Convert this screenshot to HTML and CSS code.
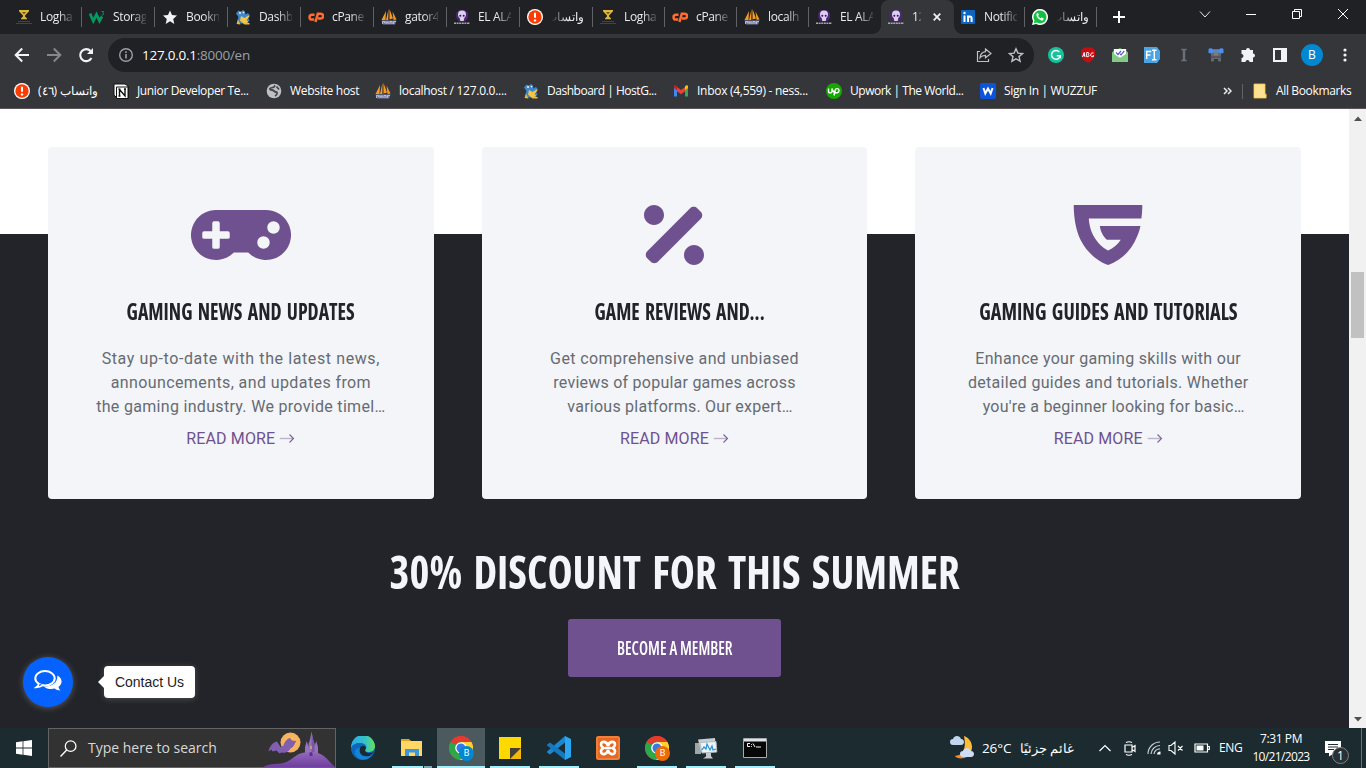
FILE: index.html
```html
<!DOCTYPE html>
<html lang="en">
<head>
<meta charset="utf-8">
<title>127.0.0.1:8000/en</title>
<link rel="stylesheet" href="styles.css">
</head>
<body>
<svg class="defs" width="0" height="0">
  <symbol id="hourglass" viewBox="0 0 16 16"><path d="M3 1h10v1.300L9 6.600v1l2 2v.6H5v-.6l2-2v-1L3 2.300z" fill="#dcb93c"/><path d="M6 3h4L8 5.200z" fill="#6b5510"/><path d="M2 12.500h12M0 14.500h16" stroke="#51451f" stroke-width="1.100"/></symbol>
  <symbol id="w3" viewBox="0 0 16 16"><path d="M1 4.500l3.300 7.500L7.500 5.500 10.500 12 13 7.500" fill="none" stroke="#059862" stroke-width="2.800"/><path d="M12.500 2.500h2.200l-1 1.500c1.300.2 1.300 2-.2 2h-1" fill="none" stroke="#059862" stroke-width=".9"/></symbol>
  <symbol id="star" viewBox="0 0 16 16"><path d="M8 1.500l2 4.600 5 .5-3.800 3.400 1.100 5L8 12.300 3.700 15l1.100-5L1 6.600l5-.5z" fill="#f1f3f4"/></symbol>
  <symbol id="gator" viewBox="0 0 16 16"><path d="M1 4.500L3.500 1.500 6 2.500 8 1l2 1.500.5 3L13 4l2 2.500-2 2 1.500 3-3 3H5L2 12.500 3.500 8z" fill="#3f87c9"/><path d="M6 7l3.500 2 4-2.500 1 1-3 3.500 2 2L9 15l-4-3.500z" fill="#f7c544"/><path d="M1.500 15L3 11l2.500 4.500zM9 15.500l1-2 4.500.5v1.500z" fill="#f0bd37"/><circle cx="5" cy="4" r=".9" fill="#fff"/><circle cx="8.500" cy="3.600" r=".8" fill="#fff"/></symbol>
  <symbol id="cpanel" viewBox="0 0 16 16"><path d="M6.500 5.700H4a2.400 2.400 0 0 0 0 4.900h2.200M7.500 13l2.300-8.200h2.900a2.300 2.300 0 0 1 0 4.800H10" fill="none" stroke="#ff6c2c" stroke-width="2.500"/></symbol>
  <symbol id="pma" viewBox="0 0 16 16"><path d="M5 2L.5 11h4zM7.500 0L5 11h2.300zM8.500 0l3.500 9.500-3.500 1zM11.500 2.500l4 8-3 .5z" fill="#f59a23"/><path d="M.5 11.500h15l-1.500 4H2z" fill="#777b9f"/><path d="M1.500 15v-2.500h2V14M5 15v-2.500l1 1.200 1-1.200V15M9 15v-2.500h2V15M12.500 15v-2.500H15" fill="none" stroke="#c8cbe2" stroke-width=".8"/></symbol>
  <symbol id="skull" viewBox="0 0 16 16"><path d="M2.300 4L5 1h6l3 3v5l-3 3.500H5L2.300 9z" fill="#4f257b"/><path d="M4 5.500A4 4 0 0 1 12 5.500c0 2-1 3-1.700 3.600L9.700 12H6.300L5.700 9.100C4.700 8.500 4 7.500 4 5.500z" fill="#d9d2ea"/><circle cx="6.300" cy="6.800" r="1" fill="#33154f"/><circle cx="9.700" cy="6.800" r="1" fill="#33154f"/><path d="M0 14.200h16" stroke="#a9a6b0" stroke-width="1.500" stroke-dasharray="2 .6"/></symbol>
  <symbol id="alert" viewBox="0 0 16 16"><circle cx="8" cy="8" r="8" fill="#fff"/><circle cx="8" cy="8" r="6.700" fill="#fc3d03"/><path d="M8 3.700v5" stroke="#fff" stroke-width="2"/><circle cx="8" cy="11.400" r="1.200" fill="#fff"/></symbol>
  <symbol id="linkedin" viewBox="0 0 16 16"><rect x="1" y="1" width="14" height="14" rx="1" fill="#0a66c2"/><path d="M4.500 6.500V13M8 13V6.500M8 9.500c0-2.700 3.600-2.700 3.600 0V13" fill="none" stroke="#fff" stroke-width="2"/><circle cx="4.500" cy="4" r="1.200" fill="#fff"/></symbol>
  <symbol id="whatsapp" viewBox="0 0 16 16"><path d="M0 16l1.100-4A8 8 0 1 1 4.200 15z" fill="#fff"/><path d="M1.700 14.300l.8-2.800a6.500 6.500 0 1 1 2.200 2.100z" fill="#12c143"/><path d="M5 4.200c-1.500 1.800.2 4.500 1.800 5.800 1.800 1.500 4.300 2.300 4.800.3.200-.9-.3-1.100-1.600-1.700-.8-.3-1 1-1.600.7C7.500 9 6.600 8 6.200 7.100c-.2-.6.8-.9.600-1.500-.5-1.500-.9-2-1.800-1.400z" fill="#fff"/></symbol>
  <symbol id="chrome" viewBox="0 0 24 24"><circle cx="12" cy="12" r="12" fill="#e33b2e"/><path d="M1.600 6A12 12 0 0 0 11 24l6-9-5-3-5.200 3z" fill="#2aa84a"/><path d="M22.400 6H12l5.200 9L11 24A12 12 0 0 0 22.400 6z" fill="#fdd231"/><path d="M1.600 6L6.800 15 12 12V6z" fill="#2aa84a"/><path d="M1.600 6A12 12 0 0 1 22.400 6H12a6 6 0 0 0-5.500 4z" fill="#e33b2e"/><path d="M1.600 6L6.800 15l.5-6z" fill="#2aa84a"/><circle cx="12" cy="12" r="5.800" fill="#fff"/><circle cx="12" cy="12" r="4.500" fill="#3478ea"/></symbol>
  <symbol id="arrow" viewBox="0 0 16 16"><path d="M.8 7.500h13.500" stroke="#bdb4cb" stroke-width="1.400"/><path d="M10.500 3.500l4 4-4 4" fill="none" stroke="#7b5f9b" stroke-width="1.100"/></symbol>
</svg>

<header class="browser">
  <div class="tabstrip">
    <div class="tab"><svg><use href="#hourglass"/></svg><span>Logha</span></div>
    <div class="tab"><svg><use href="#w3"/></svg><span>Storag</span></div>
    <div class="tab"><svg><use href="#star"/></svg><span>Bookn</span></div>
    <div class="tab"><svg><use href="#gator"/></svg><span>Dashb</span></div>
    <div class="tab"><svg><use href="#cpanel"/></svg><span>cPanel</span></div>
    <div class="tab"><svg><use href="#pma"/></svg><span>gator4</span></div>
    <div class="tab"><svg><use href="#skull"/></svg><span>EL ALA</span></div>
    <div class="tab rtl"><svg><use href="#alert"/></svg><span dir="rtl">واتساب</span></div>
    <div class="tab narrow"><svg><use href="#hourglass"/></svg><span>Logha</span></div>
    <div class="tab narrow"><svg><use href="#cpanel"/></svg><span>cPane</span></div>
    <div class="tab narrow"><svg><use href="#pma"/></svg><span>localh</span></div>
    <div class="tab narrow last"><svg><use href="#skull"/></svg><span>EL ALA</span></div>
    <div class="tab narrow active"><svg><use href="#skull"/></svg><span>12</span><svg class="tab-close" viewBox="0 0 8 8"><path d="M.7.7l6.600 6.600M7.300.7L.7 7.300" stroke="#f1f3f4" stroke-width="1.700"/></svg></div>
    <div class="tab narrow"><svg><use href="#linkedin"/></svg><span>Notific</span></div>
    <div class="tab narrow rtl"><svg><use href="#whatsapp"/></svg><span dir="rtl">واتساب</span></div>
    <svg class="newtab" viewBox="0 0 12 12"><path d="M6 0v12M0 6h12" stroke="#fff" stroke-width="2"/></svg>
    <div class="winctl">
      <svg viewBox="0 0 12 12"><path d="M1 3.500l5 5.500 5-5.500" fill="none" stroke="#e8eaed"/></svg>
      <svg viewBox="0 0 12 12"><path d="M1 6.500h10" stroke="#fff"/></svg>
      <svg viewBox="0 0 12 12"><path d="M1.500 3.500h7v7h-7zM3.500 3.500v-2h7v7h-2" fill="none" stroke="#fff"/></svg>
      <svg viewBox="0 0 12 12"><path d="M1 1l10 10M11 1L1 11" stroke="#fff"/></svg>
    </div>
  </div>

  <div class="toolbar">
    <svg class="nav" viewBox="0 0 16 16"><path d="M15 8H2M8.200 1.500L1.700 8l6.500 6.500" fill="none" stroke="#f1f3f4" stroke-width="2"/></svg>
    <svg class="nav" viewBox="0 0 16 16"><path d="M1 8h13M7.800 1.500L14.300 8l-6.500 6.500" fill="none" stroke="#85878a" stroke-width="2"/></svg>
    <svg class="nav" viewBox="0 0 16 16"><path d="M13.500 11A6 6 0 1 1 12.600 4" fill="none" stroke="#f1f3f4" stroke-width="2.100"/><path d="M15 1v6H9z" fill="#f1f3f4"/></svg>
    <div class="omnibox">
      <svg class="info" viewBox="0 0 16 16"><circle cx="8" cy="8" r="6.300" fill="none" stroke="#9aa0a6" stroke-width="1.400"/><path d="M8 7v4.500M8 4.300v1.600" stroke="#9aa0a6" stroke-width="1.600"/></svg>
      <div class="url"><b>127.0.0.1</b>:8000/en</div>
      <div class="slot"><svg viewBox="0 0 16 16"><path d="M4 4.500H1.500v10h11V12" fill="none" stroke="#bdc1c6" stroke-width="1.200"/><path d="M9.500 2l5.500 4.500-5.500 4.300V8.300c-2.500 0-4.300.8-5.500 2.400C4.300 7.200 6.200 5 9.500 4.600z" fill="none" stroke="#bdc1c6" stroke-width="1.200"/></svg></div>
      <div class="slot"><svg viewBox="0 0 16 16"><path d="M8 1.800l1.900 4.300 4.700.4L11 9.600l1.100 4.600L8 11.800l-4.100 2.400L5 9.600 1.400 6.500l4.700-.4z" fill="none" stroke="#bdc1c6" stroke-width="1.400"/></svg></div>
    </div>
    <div class="extensions">
      <div class="slot"><svg viewBox="0 0 16 16"><circle cx="8" cy="8" r="8" fill="#15c39a"/><path d="M11.300 5A4.400 4.400 0 1 0 12.300 8.700H8.800M12.300 8.700v2.500" fill="none" stroke="#fff" stroke-width="1.400"/></svg></div>
      <div class="slot"><svg viewBox="0 0 16 16"><path d="M4.500.5h7L15 3v5c0 3-3 6-7 7.800C4 14 1 11 1 8V3z" fill="#c70d12"/><path d="M2.500 10l1.700-4.500L5 10M3.300 8.500H5M6.700 5.500v4.200h1.500c1.200-.3 1-2 0-2.200 1-.2 1-1.800 0-2zM13.500 6h-1.700c-1.500.5-1.500 3.500 0 3.700h1.500V8" fill="none" stroke="#fff" stroke-width="1"/></svg></div>
      <div class="slot"><svg viewBox="0 0 16 16"><path d="M0 5l8-4 8 4v10H0z" fill="#65b96a"/><path d="M1.800 2h12.400v6L8 11 1.800 8z" fill="#fff"/><path d="M0 5.500l8 5.500 8-5.500V15H0z" fill="#82cb83"/><path d="M4 5.500l2 2 3-3.500M8 7l1 .8L12.300 4" fill="none" stroke="#5b60c5" stroke-width="1.200"/></svg></div>
      <div class="slot"><svg viewBox="0 0 16 16"><path d="M0 0h13l3 4v8l-3 4H0z" fill="#4ba4e3"/><path d="M2.700 12V4.500h4.500M2.700 8h3.800M8 3.300h4.500M8 12.700h4.500M10.300 3.300v9.400" fill="none" stroke="#fff" stroke-width="1.400"/></svg></div>
      <div class="slot"><svg viewBox="0 0 16 16"><path d="M5.300 2.500h5.400M5.300 13.500h5.400" stroke="#6b7178" stroke-width="1.400"/><path d="M8 2v12" stroke="#6b7178" stroke-width="2.400"/></svg></div>
      <div class="slot"><svg viewBox="0 0 16 16"><path d="M3 5h10v9.500h-3V12H6v2.500H3z" fill="#63676e"/><path d="M2.500 10h11" stroke="#46494f"/><path d="M.5 2.500C1 1 4 1 4.500 2.300h7C12 1 15 1 15.500 2.500V6l-3 .5-1.500-1H5l-1.500 1-3-.5z" fill="#4a8ff0"/><path d="M6 3.500h4v5H6z" fill="#7a7e85"/></svg></div>
      <div class="slot"><svg viewBox="0 0 16 16"><path d="M6 3a2 2 0 0 1 4 0h3v3.500a2 2 0 0 1 0 4V15H9.500a2 2 0 0 0-4 0H1.500v-4a2 2 0 0 0 0-4V3z" fill="#f1f3f4"/></svg></div>
      <div class="slot"><svg viewBox="0 0 16 16"><path d="M2 2h12v12H2z" fill="none" stroke="#f1f3f4" stroke-width="2"/><path d="M9 2h5v12H9z" fill="#f1f3f4"/></svg></div>
      <div class="slot"><span class="avatar">B</span></div>
      <div class="slot menu"><svg viewBox="0 0 16 16" fill="#f1f3f4"><circle cx="8" cy="3" r="1.600"/><circle cx="8" cy="8" r="1.600"/><circle cx="8" cy="13" r="1.600"/></svg></div>
    </div>
  </div>

  <div class="bookmarks">
    <div class="bm"><svg><use href="#alert"/></svg><span dir="rtl" class="ar">واتساب (٤٦)</span></div>
    <div class="bm"><svg viewBox="0 0 16 16"><path d="M1 1h11l3 2v12H4l-3-3z" fill="#fff" stroke="#111"/><path d="M3.500 4H15v11.500H3.500z" fill="#fff" stroke="#111"/><path d="M6.500 13V6.500l5.500 6.300V6M5.500 6.300h2M5.500 13h2M11 6h2" fill="none" stroke="#111" stroke-width="1.400"/></svg><span>Junior Developer Te...</span></div>
    <div class="bm"><svg viewBox="0 0 16 16"><circle cx="8" cy="8" r="7.300" fill="#bdc1c6"/><path d="M8 2.500c2 1-1 2-3 2.500s-1 2 1 2 2 2 4 2 1 3-1 4M10.500 3.500l2.500 3" fill="none" stroke="#46484d" stroke-width="1.800"/></svg><span class="loose">Website host</span></div>
    <div class="bm"><svg><use href="#pma"/></svg><span class="loose">localhost / 127.0.0....</span></div>
    <div class="bm"><svg><use href="#gator"/></svg><span class="tight">Dashboard | HostG...</span></div>
    <div class="bm"><svg viewBox="0 0 16 16"><path d="M1 3v10.500h3V7z" fill="#4285f4"/><path d="M12 7v6.500h3V3z" fill="#34a853"/><path d="M4 8.300V4l4 3 4-3v4.300L8 11.300z" fill="#ea4335"/><path d="M1 5V3.500C1 2 2.500 2 3.300 2.700L4 3.300v4z" fill="#c5221f"/><path d="M15 5V3.500c0-1.500-1.500-1.500-2.300-.8L12 3.300v4z" fill="#fbbc04"/></svg><span class="loose">Inbox (4,559) - ness...</span></div>
    <div class="bm"><svg viewBox="0 0 16 16"><circle cx="8" cy="8" r="8" fill="#14a800"/><path d="M2.500 5.500V8c0 2.500 3.500 2.500 3.500 0V5.500c.7 2 1.500 4.500 3.500 4.500M8 12.500l1-5c.5-2.500 4-2.500 4 0S10 10.500 9 9" fill="none" stroke="#fff" stroke-width="1.400"/></svg><span class="tight">Upwork | The World...</span></div>
    <div class="bm"><svg viewBox="0 0 16 16"><rect width="16" height="16" rx="2" fill="#0c54db"/><path d="M3.500 5l1.800 5.500L8 5.500l2.700 5L12.500 5" fill="none" stroke="#fff" stroke-width="2"/></svg><span>Sign In | WUZZUF</span></div>
    <div class="more"><svg viewBox="0 0 9 8"><path d="M1 1l3 3-3 3M5 1l3 3-3 3" fill="none" stroke="#e8eaed" stroke-width="1.500"/></svg></div>
    <div class="bm all"><svg viewBox="0 0 16 16"><path d="M2 1h11v10l1 1v3H2z" fill="#fde293"/><path d="M2 1h11v10h1.200v4H2z" fill="none" stroke="#f7cb4d" stroke-width=".8"/></svg><span>All Bookmarks</span></div>
  </div>
</header>

<div class="viewport">
  <main class="page">
    <section class="cards">
      <article class="card">
        <svg class="card-icon" viewBox="0 0 640 512" width="100" height="80"><path fill-rule="evenodd" d="M480.070 96H160a160 160 0 1 0 114.240 272h91.520A160 160 0 1 0 480.070 96zM248 268a12 12 0 0 1-12 12h-52v52a12 12 0 0 1-12 12h-24a12 12 0 0 1-12-12v-52H84a12 12 0 0 1-12-12v-24a12 12 0 0 1 12-12h52v-52a12 12 0 0 1 12-12h24a12 12 0 0 1 12 12v52h52a12 12 0 0 1 12 12zm216 76a40 40 0 1 1 40-40 40 40 0 0 1-40 40zm64-96a40 40 0 1 1 40-40 40 40 0 0 1-40 40z"/></svg>
        <h5><span class="t1">GAMING NEWS AND UPDATES</span></h5>
        <p><span class="ls6">Stay up-to-date with the latest news,</span><span class="ls4">announcements, and updates from</span><span>the gaming industry. We provide timel…</span></p>
        <a>READ MORE<svg><use href="#arrow"/></svg></a>
      </article>
      <article class="card">
        <svg class="card-icon" viewBox="0 0 384 512" width="60" height="80"><path d="M109.250 173.250c24.990-24.990 24.990-65.520 0-90.510-24.990-24.990-65.520-24.990-90.510 0-24.990 24.990-24.990 65.520 0 90.510 25 25 65.520 25 90.510 0zm256 165.490c-24.990-24.990-65.520-24.990-90.510 0-24.990 24.990-24.990 65.520 0 90.510 24.990 24.990 65.520 24.990 90.510 0 25-24.990 25-65.510 0-90.510zm-1.940-231.430l-22.620-22.620c-12.500-12.500-32.760-12.500-45.250 0L20.690 359.440c-12.500 12.500-12.500 32.760 0 45.250l22.620 22.620c12.500 12.500 32.760 12.500 45.250 0l274.750-274.750c12.500-12.490 12.500-32.750 0-45.250z"/></svg>
        <h5 class="clamped"><span class="t2">GAME REVIEWS AND...</span></h5>
        <p><span class="ls4">Get comprehensive and unbiased</span><span class="ls2">reviews of popular games across</span><span class="ls2 clamped">various platforms. Our expert…</span></p>
        <a>READ MORE<svg><use href="#arrow"/></svg></a>
      </article>
      <article class="card">
        <svg class="card-icon" viewBox="0 0 448 512" width="70" height="80"><path d="M443.400 64H4.600c0 103.300 22.200 180.100 43.400 222.400C112 414.100 224 448 225.300 448a312.800 312.800 0 0 0 140.600-103.500c25.900-33.900 53.100-87.200 65.900-145.800H171.800c4.100 36.400 22.200 67.900 45.100 86.900h88.600c-17 28.200-48.200 54.400-80.500 69.500-31.200-13.300-69.100-46.500-96.600-98.400-26.600-53.800-27.100-105.900-27.100-105.900H437.600a625.900 625.900 0 0 0 5.800-70.700z"/></svg>
        <h5><span class="t3">GAMING GUIDES AND TUTORIALS</span></h5>
        <p><span>Enhance your gaming skills with our</span><span>detailed guides and tutorials. Whether</span><span class="ls2 clamped">you're a beginner looking for basic…</span></p>
        <a>READ MORE<svg><use href="#arrow"/></svg></a>
      </article>
    </section>
    <section class="promo">
      <h1><span>30% DISCOUNT FOR THIS SUMMER</span></h1>
      <button><span>BECOME A MEMBER</span></button>
    </section>
    <div class="contact">
      <span class="chat"><svg viewBox="0 0 28 22"><ellipse cx="11" cy="8.300" rx="9.700" ry="7.200" fill="none" stroke="#fff" stroke-width="2"/><path d="M5 13.500c0 2-1.500 3-3 4 3 0 5-.7 7-2.300" fill="#0662ff" stroke="#fff" stroke-width="1.700"/><path d="M23.300 5.500c6 3 5 9 1.200 11.200.2 1.600 1 2.500 2 3.800-2.500 0-4-.5-5.800-1.900-4.500.9-8.500 0-11-2.200C17.500 17 24 13 23.300 5.500z" fill="#fff"/></svg></span>
      <span class="tip">Contact Us</span>
    </div>
  </main>
  <div class="scrollbar">
    <svg viewBox="0 0 8 5"><path d="M0 5l4-4.500L8 5z" fill="#505050"/></svg>
    <i></i>
    <svg viewBox="0 0 8 5"><path d="M0 0l4 4.500L8 0z" fill="#505050"/></svg>
  </div>
</div>

<footer class="taskbar">
  <div class="start"><svg viewBox="0 0 16 16" fill="#fff"><path d="M0 2.200L6.600 1.300V7.600H0zM7.400 1.200L16 0v7.600H7.400zM0 8.400h6.600v6.300L0 13.800zM7.400 8.400H16V16l-8.600-1.200z"/></svg></div>
  <div class="search">
    <svg class="lens" viewBox="0 0 16 16"><circle cx="10" cy="5.800" r="5" fill="none" stroke="#fff" stroke-width="1.200"/><path d="M6.300 9.500L.5 15.500" stroke="#fff" stroke-width="1.300"/></svg>
    <span>Type here to search</span>
    <svg class="castle" viewBox="0 0 72 38"><defs><linearGradient id="hill" x2="0" y2="1"><stop offset="0" stop-color="#9468be"/><stop offset="1" stop-color="#6e3f9c"/></linearGradient><radialGradient id="moon"><stop offset="0" stop-color="#ffc44c"/><stop offset="1" stop-color="#f5ae62"/></radialGradient></defs><circle cx="27.500" cy="13.500" r="10" fill="url(#moon)"/><path d="M5.500 22.500c1-5 4-9 8.500-10l3.500 5.500 3-1.500c1-4 4-7 6.500-7.500l2 2.500 4.500.5c-2 2-2 6-6 7.500-2 4-6 5-9 4l-2 1-3-3-4 1-1-2z" fill="#805eb0"/><path d="M42 30V18l1.800-6 1.800 6v-3l1.500-5 1.400-7.500L50 10l1.500 5v2l1.800-5 1.700 6v12z" fill="#9571c1"/><path d="M48.600 3v26h2.900V15l-1.500-5z" fill="#775aa6"/><path d="M0 38c9-5 19-1 27-7 8-6 11-8 21-8 13 0 16 8 24 15z" fill="url(#hill)"/><path d="M46.500 27v-2.500a1.500 1.500 0 0 1 3 0V27z" fill="#5d318a"/><path d="M48 17v3" stroke="#f3b558" stroke-width="1.200"/></svg>
  </div>
  <div class="apps">
    <div class="app"><svg viewBox="0 0 24 24"><defs><linearGradient id="edge" x2="1"><stop offset="0" stop-color="#28a9ea"/><stop offset=".6" stop-color="#35c4c8"/><stop offset="1" stop-color="#67df55"/></linearGradient></defs><circle cx="12" cy="12" r="12" fill="#0c67bd"/><path d="M0 12A12 12 0 0 1 24 10c0 5-4 6-7 6s-3-2-2.300-3c2-3-1-6-5.700-6S1 9 0 12z" fill="url(#edge)"/><path d="M9 12c1-3 5-3 6 0 0 1-1 1-1 2.500 0 2.500 5 3.500 8.500 1.500-1 3-4 4.500-7 4.500C10 20.500 7.500 16 9 12z" fill="#1a2a2f"/><path d="M9 12c-2 4 1 8.500 6.500 8.500 3 0 5.500-1.500 7-4.500-3 8-13 10-17 4.500C2 15.500 5 12 9 12z" fill="#1385d7"/></svg></div>
    <div class="app split"><svg viewBox="0 0 24 24"><path d="M1 3h8l2 2h-10z" fill="#e3a21a"/><path d="M1 5h21v15H1z" fill="#ffd765"/><path d="M5 20v-7h14v7h-4v-3.500H9V20z" fill="#3a96dd"/></svg></div>
    <div class="app current"><svg><use href="#chrome"/></svg><b class="badge">B</b></div>
    <div class="app on"><svg viewBox="0 0 24 24"><path d="M1 1h22v11L12 23H1z" fill="#fdd900"/><path d="M12 12h11v11H12z" fill="#f4b80b"/><path d="M12 12h11L12 23z" fill="#454035"/></svg></div>
    <div class="app on"><svg viewBox="0 0 24 24"><path d="M18 0l6 3v18l-6 3z" fill="#2aa7f2"/><path d="M18 0v6.500L3 18.500l-3-2v-1z" fill="#1b86d1"/><path d="M0 8.500l3-2 15 11V24L0 9.500z" fill="#1479c0"/></svg></div>
    <div class="app"><svg viewBox="0 0 24 24"><rect width="24" height="24" rx="2" fill="#e8681f"/><rect x="1" y="1" width="22" height="22" rx="1.500" fill="none" stroke="#f5975d"/><path d="M12 10c-1-5-7-5.500-7-1.500 0 2 1 2.500 2.500 3.500C5.500 13 5 14 5 15.500c0 4 6 3.500 7-1.500 1 5 7 5.500 7 1.500 0-1.500-.5-2.500-2.500-3.500C18 11 19 10.500 19 8.500c0-4-6-3.500-7 1.500zM9 12h6" fill="none" stroke="#fff" stroke-width="2.600"/></svg></div>
    <div class="app on"><svg><use href="#chrome"/></svg><b class="badge orange">B</b></div>
    <div class="app on"><svg viewBox="0 0 24 24"><path d="M1 7h6v11H1z" fill="#9fa6a8"/><path d="M4 3.500l17-1.500 1 12-15 1.500z" fill="#c9ced1"/><path d="M6 6.500l16-1 .8 10.500L8 17z" fill="#eef4f7" stroke="#b5babd"/><path d="M8 14l2-3 2 2 1-5 3 6 2-4 1 4 3-1" fill="none" stroke="#2490d9" stroke-width="1.200"/><path d="M12 17h5v3l2 2.500H9l3-2z" fill="#c4c8ca"/></svg></div>
    <div class="app on"><svg viewBox="0 0 24 24"><path d="M.5 2.500h23v19H.5z" fill="#070707" stroke="#a6aaac"/><path d="M1 3h22v2.500H1z" fill="#dfe3e5"/><path d="M7 7.500H4.500v3H7M8.500 8v.8M8.500 10v.8M10 7.500l2 3.500M13 11h5" fill="none" stroke="#f4f4f4"/></svg></div>
  </div>
  <div class="tray">
    <div class="weather"><svg viewBox="0 0 24 24"><path d="M14 1c5 2 8 6 8 11s-4 11-11 11c-3 0-5-1-6-2 7 0 12-6 9-20z" fill="#ffbd35"/><path d="M5 21c5 0 9-3 10-8l2 9c-4 2-10 2-12-1z" fill="#f78b1f"/><path d="M3 10a3 3 0 0 1 0-6c1-4 7-4 8 0 4 0 4 6 0 6z" fill="#c3d4ef"/><path d="M13 22a3 3 0 0 1 0-6c1-4 7-4 8 0 4 0 4 6 0 6z" fill="#cfdcf5"/></svg></div>
    <span class="temp">26°C</span>
    <span class="cond" dir="rtl">غائم جزئيًا</span>
    <div class="slot"><svg viewBox="0 0 12 12"><path d="M.5 9L6 3.500 11.500 9" fill="none" stroke="#fff" stroke-width="1.200"/></svg></div>
    <div class="slot"><svg class="i16" viewBox="0 0 16 16"><path d="M3 5h7v7H3zM10 7.500l3-2v6l-3-2M4 2.500q3-1.500 6 0M4 14.500q3 1.500 6 0" fill="none" stroke="#fff" stroke-width="1.200"/></svg></div>
    <div class="slot"><svg class="i14" viewBox="0 0 14 14"><path d="M1 13A12 12 0 0 1 13 1M4 13A9 9 0 0 1 13 4.500M7 13a6 6 0 0 1 6-5.200" fill="none" stroke="#c6ccce" stroke-width="1.200"/><path d="M10 13.500a3 3 0 0 1 3.500-3v3z" fill="#fff"/></svg></div>
    <div class="slot"><svg class="i16" viewBox="0 0 16 16"><path d="M1 5.500h2l4-3.500v12l-4-3.500H1zM10 6l4.500 4.500M14.500 6L10 10.500" fill="none" stroke="#fff" stroke-width="1.100"/></svg></div>
    <div class="slot"><svg class="i16" viewBox="0 0 16 16"><path d="M1 4h12.500v8H1zM14 6.500h1.300v3H14" fill="none" stroke="#fff" stroke-width="1.200"/><path d="M2.500 5.500h7v5h-7z" fill="#fff"/></svg></div>
    <span class="lang">ENG</span>
    <div class="clock"><span>7:31 PM</span><span>10/21/2023</span></div>
    <div class="notif"><svg viewBox="0 0 16 16"><path d="M0 0h16v12H9.500L4 15.500V12H0z" fill="#fff"/><path d="M3 3.500h10M3 6h10M3 8.500h6" stroke="#1d2c31" stroke-width="1"/></svg><b>1</b></div>
    <div class="peek"></div>
  </div>
</footer>
</body>
</html>
```
FILE: styles.css
```css
* { box-sizing: border-box; }
body {
  margin: 0;
  width: 1366px;
  height: 768px;
  overflow: hidden;
  display: flex;
  flex-direction: column;
  font: 12px/16px "Open Sans", "Noto Sans", sans-serif;
  color: #fff;
  background: #222429;
}
svg { display: block; flex: none; }
.defs { position: absolute; }

/* browser chrome */
.browser { height: 109px; background: #35363a; border-bottom: 1px solid #5c5458; }
.tabstrip { display: flex; height: 34px; padding-left: 8.5px; background: #202124; }
.tab { display: flex; align-items: center; gap: 8px; width: 73px; padding-left: 7.5px; position: relative; color: #e8eaed; letter-spacing: -.35px; }
.tab.narrow { width: 72px; }
.tab > svg { width: 16px; height: 16px; }
.tab > span { width: 33px; white-space: nowrap; -webkit-mask: linear-gradient(90deg, #000 55%, transparent 108%); mask: linear-gradient(90deg, #000 55%, transparent 108%); }
.tab.rtl > span { letter-spacing: 0; -webkit-mask: linear-gradient(270deg, #000 50%, transparent 100%); mask: linear-gradient(270deg, #000 50%, transparent 100%); }
.tab::after { content: ""; position: absolute; right: 0; top: 7px; width: 1px; height: 20px; background: #5f6368; }
.tab.last::after, .tab.active::after { display: none; }
.tab.active { background: #35363a; border-radius: 8px 8px 0 0; width: 73px; margin-right: -1px; }
.tab.active > span { width: 9px; }
.tab.active .tab-close { width: 8px; height: 8px; margin-left: 4px; }
.tab.active::before {
  content: ""; position: absolute; left: -8px; right: -8px; bottom: 0; height: 8px;
  background:
    radial-gradient(circle at 0 0, transparent 7.5px, #35363a 8px) left / 8px 8px no-repeat,
    radial-gradient(circle at 100% 0, transparent 7.5px, #35363a 8px) right / 8px 8px no-repeat;
}
.newtab { width: 12px; height: 12px; margin: 11px 0 0 16px; }
.winctl { display: grid; grid-template-columns: repeat(4, 46px); margin-left: auto; height: 28px; place-items: center; }
.winctl svg { width: 12px; height: 12px; }

.toolbar { display: flex; align-items: center; height: 42px; padding-left: 14px; }
.nav { width: 16px; height: 16px; margin-right: 16px; }
.omnibox { display: flex; align-items: center; width: 926px; height: 34px; margin-left: -2px; padding: 0 2px 0 10px; border-radius: 17px; background: #202124; }
.info { width: 16px; height: 16px; }
.url { flex: 1; padding-left: 8px; font-size: 13.5px; letter-spacing: -.25px; color: #9aa0a6; }
.url b { font-weight: 400; color: #fff; }
.slot { display: flex; align-items: center; justify-content: center; }
.toolbar .slot { width: 32px; }
.toolbar .slot svg { width: 16px; height: 16px; }
.extensions { display: flex; margin-left: 6px; align-items: center; }
.toolbar .menu { margin-left: 1px; }
.avatar { width: 22px; height: 22px; border-radius: 50%; background: #0288d1; text-align: center; line-height: 22px; }

.bookmarks { display: grid; grid-template-columns: 99px 153px 109px 148px 150px 153px 154px 242px 30px 1fr; height: 30px; padding-left: 14px; align-items: center; }
.bm { display: flex; align-items: center; gap: 8px; white-space: nowrap; letter-spacing: -.36px; }
.bm svg { width: 16px; height: 16px; }
.bm span { margin-top: -1px; }
.bm .ar { letter-spacing: 0; }
.bm .tight { letter-spacing: -.48px; }
.bm .loose { letter-spacing: -.28px; }
.more svg { width: 9px; height: 8px; margin-left: 1px; }
.bm.all { height: 15px; border-left: 1px solid #5f6368; margin-left: -10px; padding-left: 9px; }

/* page */
.viewport { display: flex; height: 619px; }
.page { position: relative; width: 1349px; padding-top: 38px; background: linear-gradient(#fff 125px, #222429 125px); }
.cards { display: grid; grid-template-columns: repeat(3, 1fr); gap: 48px; padding: 0 48px; }
.card { display: flex; flex-direction: column; align-items: center; height: 352px; padding-top: 48px; border-radius: 4px; background: #f3f5f9; font-family: Roboto, sans-serif; font-size: 16px; }
.card-icon { fill: #6f518f; }
.card h5 { margin: 24px 0 0; height: 24px; color: #212329; font: 700 23px/24px "Open Sans", sans-serif; font-stretch: 75%; word-spacing: 2px; white-space: nowrap; }
.card h5 span { display: inline-block; }
.t1 { transform: scaleX(.86); }
.t2 { transform: scaleX(.854); }
.t3 { transform: scaleX(.876); }
.card p { margin: 24px 0 0; line-height: 24px; color: #666b72; text-align: center; letter-spacing: .31px; white-space: nowrap; }
.card p span { display: block; }
.card p .ls6 { letter-spacing: .6px; }
.card p .ls4 { letter-spacing: .4px; }
.card p .ls2 { letter-spacing: .24px; }
.card .clamped { padding-left: 11px; }
.card a { display: flex; align-items: center; gap: 4px; margin-top: 8px; line-height: 24px; color: #6f518f; letter-spacing: .13px; }
.card a svg { width: 16px; height: 16px; }

.promo { display: flex; flex-direction: column; align-items: center; padding-top: 47px; }
.promo h1 { margin: 0; height: 50px; font: 700 47px/50px "Open Sans", sans-serif; font-stretch: 75%; word-spacing: 4px; color: #f3f5f9; white-space: nowrap; }
.promo h1 span, .promo button span { display: inline-block; transform: scaleX(.903); }
.promo button { width: 213px; height: 58px; margin-top: 23px; padding: 0; border: 0; border-radius: 3px; background: #6f518f; color: #fff; font: 600 19px/24px "Open Sans", sans-serif; font-stretch: 75%; white-space: nowrap; }
.promo button span { transform: scaleX(.84); }

.contact { position: absolute; left: 23px; bottom: 21px; display: flex; align-items: center; gap: 31px; }
.chat { display: grid; place-items: center; width: 50px; height: 50px; border-radius: 50%; background: #0662ff; box-shadow: 0 1px 6px rgba(255,255,255,.25); }
.chat svg { width: 28px; height: 22px; margin-top: -2px; }
.tip { position: relative; width: 91px; height: 32px; border-radius: 4px; background: #fff; color: #222; text-align: center; font: 14px/32px "Liberation Sans", Arial, sans-serif; box-shadow: 0 1px 6px rgba(255,255,255,.2); }
.tip::before { content: ""; position: absolute; left: -6px; top: 10px; border: 6px solid transparent; border-left: 0; border-right-color: #fff; }

.scrollbar { display: flex; flex-direction: column; align-items: center; width: 17px; padding: 7px 0 6px; background: #f1f1f1; }
.scrollbar svg { width: 8px; height: 5px; }
.scrollbar i { width: 13px; height: 66px; margin: 151px 0 auto; background: #c1c1c1; }

/* taskbar */
.taskbar { display: flex; height: 40px; background: #1b2b30; }
.start { display: grid; place-items: center; width: 48px; }
.start svg { width: 16px; height: 16px; }
.search { display: flex; align-items: center; width: 288px; border: 1px solid #626467; background: #323232; color: #d8d8d8; font-size: 14px; padding-left: 11px; }
.lens { width: 17px; height: 17px; margin-right: 11px; }
.search span { flex: 1; white-space: nowrap; }
.castle { width: 72px; height: 38px; }
.apps { display: flex; gap: 1px; margin-left: 3px; }
.app { display: grid; place-items: center; position: relative; width: 48px; height: 40px; }
.app > svg { width: 24px; height: 24px; }
.app.on::after, .app.split::after, .app.current::after { content: ""; position: absolute; left: 4px; right: 4px; bottom: 0; height: 2px; background: #a3eefb; }
.app.split::after { background: linear-gradient(90deg, #a3eefb 31px, #1b2b30 31px, #1b2b30 32px, #7aa9b3 32px); }
.app.current { background: #4b5a5e; }
.app.current::after { left: 0; right: 0; }
.badge { position: absolute; left: 22px; top: 18px; width: 15px; height: 15px; border-radius: 50%; background: #0288d1; font: 9px/15px Roboto, sans-serif; text-align: center; }
.badge.orange { background: #ec6a08; }
.tray { display: grid; grid-template-columns: 32px 39px 71px 26px 24px 24px 20px 31px 28px 72px 44px 5px; align-items: center; margin-left: auto; }
.weather svg { width: 24px; height: 24px; margin-top: -3px; }
.temp { font-size: 13.5px; letter-spacing: -.1px; }
.cond { font-size: 13px; text-align: right; width: 53px; white-space: nowrap; }
.tray .slot svg { width: 12px; height: 12px; }
.tray .slot .i16 { width: 16px; height: 16px; }
.tray .slot .i14 { width: 14px; height: 14px; }
.lang { padding-left: 2px; letter-spacing: -.3px; }
.clock { display: flex; flex-direction: column; align-items: center; line-height: 18px; letter-spacing: -.65px; margin-top: -1px; }
.clock span:first-child { letter-spacing: -.4px; }
.notif { position: relative; height: 40px; padding: 13px 0 0 8px; }
.notif svg { width: 16px; height: 16px; }
.notif b { position: absolute; left: 15px; top: 19px; width: 17px; height: 17px; border: 1px solid #7c868a; border-radius: 50%; background: #2a3033; text-align: center; font: 12px/15px "Open Sans", sans-serif; }
.peek { height: 40px; border-left: 1px solid #657176; }
```
